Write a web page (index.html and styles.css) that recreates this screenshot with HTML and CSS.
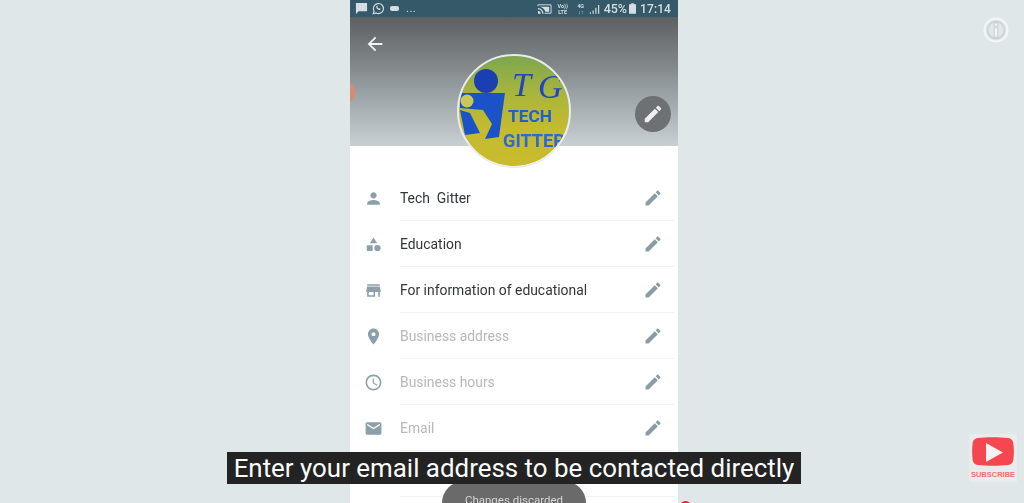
FILE: index.html
```html
<!DOCTYPE html>
<html lang="en">
<head>
<meta charset="utf-8">
<title>Tech Gitter business profile</title>
<link rel="stylesheet" href="styles.css">
</head>
<body>
<svg class="defs" width="0" height="0" aria-hidden="true">
  <symbol id="i-edit" viewBox="0 0 24 24"><path d="M3 17.25V21h3.75L17.81 9.94l-3.75-3.75L3 17.25zM20.71 7.04c.39-.39.39-1.02 0-1.41l-2.34-2.34c-.39-.39-1.02-.39-1.41 0l-1.83 1.83 3.75 3.75 1.83-1.83z"/></symbol>
  <symbol id="i-person" viewBox="0 0 24 24"><path d="M12 12c2.21 0 4-1.79 4-4s-1.79-4-4-4-4 1.79-4 4 1.79 4 4 4zm0 2c-2.67 0-8 1.34-8 4v2h16v-2c0-2.66-5.33-4-8-4z"/></symbol>
  <symbol id="i-cat" viewBox="0 0 24 24"><path d="M12 3l4.6 7.4H7.4z"/><rect x="3.5" y="12.8" width="7.4" height="7.4" rx=".8"/><circle cx="17" cy="16.5" r="4"/></symbol>
  <symbol id="i-store" viewBox="0 0 24 24"><path d="M20 4H4v2h16V4zm1 10v-2l-1-5H4l-1 5v2h1v6h10v-6h4v6h2v-6h1zm-9 4H6v-4h6v4z"/></symbol>
  <symbol id="i-place" viewBox="0 0 24 24"><path d="M12 2C8.13 2 5 5.13 5 9c0 5.25 7 13 7 13s7-7.75 7-13c0-3.87-3.13-7-7-7zm0 9.5c-1.38 0-2.5-1.12-2.5-2.5s1.12-2.5 2.5-2.5 2.5 1.12 2.5 2.5-1.12 2.5-2.5 2.5z"/></symbol>
  <symbol id="i-clock" viewBox="0 0 24 24"><path d="M11.99 2C6.47 2 2 6.48 2 12s4.47 10 9.99 10C17.52 22 22 17.52 22 12S17.52 2 11.99 2zM12 20c-4.42 0-8-3.58-8-8s3.58-8 8-8 8 3.58 8 8-3.58 8-8 8zm.5-13H11v6l5.25 3.15.75-1.23-4.5-2.67z"/></symbol>
  <symbol id="i-mail" viewBox="0 0 24 24"><path d="M20 4H4c-1.1 0-1.99.9-1.99 2L2 18c0 1.1.9 2 2 2h16c1.1 0 2-.9 2-2V6c0-1.1-.9-2-2-2zm0 4l-8 5-8-5V6l8 5 8-5v2z"/></symbol>
  <symbol id="i-globe" viewBox="0 0 24 24"><circle cx="12" cy="12" r="9"/></symbol>
</svg>

<main class="phone">
  <div class="status">
    <div class="status-left">
      <svg class="st-ico" viewBox="0 0 14 14"><path d="M1 1h12v9H4l-3 3z"/></svg>
      <svg class="st-ico" viewBox="0 0 14 14"><path class="ring" d="M1.4 12.6l.8-3A5.4 5.4 0 1 1 4.4 11.8z"/><path d="M5 4.200c-.8.7-.6 2 .6 3.300 1.300 1.300 2.600 1.600 3.300.8l.3-1-1.300-.7-.6.5c-.6-.2-1.200-.8-1.500-1.500l.5-.6-.6-1.300z"/></svg>
      <span class="pill"></span>
      <span class="dots">...</span>
    </div>
    <div class="status-right">
      <svg class="cast" viewBox="0 0 16 12"><path class="ring" d="M1 3V1.500h14v9H8"/><path d="M1 5a6 6 0 0 1 6 6H5.700A4.700 4.700 0 0 0 1 6.300zM1 8a3 3 0 0 1 3 3H1zM3 3.500h10v5.500H9A8 8 0 0 0 3 3.500z"/></svg>
      <span class="tiny">Vo))<br>LTE</span>
      <span class="tiny">4G<br>↓↑</span>
      <svg class="signal" viewBox="0 0 14 12"><path d="M1 10h1.500v2H1zM4.500 8H6v4H4.500zM8 4.500h1.500V12H8zM11.500 1H13v11h-1.500z"/></svg>
      <span class="pct">45%</span>
      <svg class="batt" viewBox="0 0 8 12"><path d="M2.500 0h3v1H7.500a.5.5 0 0 1 .5.5V11.500a.5.5 0 0 1-.5.500h-7a.5.5 0 0 1-.5-.5V1.500A.5.5 0 0 1 .5 1h2z"/></svg>
      <span class="time">17:14</span>
    </div>
  </div>

  <header class="cover">
    <svg class="back" viewBox="0 0 24 24"><path d="M20 11H7.830l5.590-5.590L12 4l-8 8 8 8 1.410-1.410L7.830 13H20v-2z"/></svg>
    <span class="edge"></span>
  </header>

  <ul class="rows">
    <li class="row"><svg class="ico"><use href="#i-person"/></svg><div class="cell"><span class="label">Tech&nbsp; Gitter</span><svg class="pen"><use href="#i-edit"/></svg></div></li>
    <li class="row"><svg class="ico"><use href="#i-cat"/></svg><div class="cell"><span class="label">Education</span><svg class="pen"><use href="#i-edit"/></svg></div></li>
    <li class="row"><svg class="ico"><use href="#i-store"/></svg><div class="cell"><span class="label">For information of educational</span><svg class="pen"><use href="#i-edit"/></svg></div></li>
    <li class="row"><svg class="ico"><use href="#i-place"/></svg><div class="cell"><span class="label muted">Business address</span><svg class="pen"><use href="#i-edit"/></svg></div></li>
    <li class="row"><svg class="ico"><use href="#i-clock"/></svg><div class="cell"><span class="label muted">Business hours</span><svg class="pen"><use href="#i-edit"/></svg></div></li>
    <li class="row"><svg class="ico"><use href="#i-mail"/></svg><div class="cell"><span class="label muted">Email</span><svg class="pen"><use href="#i-edit"/></svg></div></li>
    <li class="row"><svg class="ico"><use href="#i-globe"/></svg><div class="cell"><span class="label"></span><svg class="pen"><use href="#i-edit"/></svg></div></li>
  </ul>

  <div class="avatar">
    <svg viewBox="0 0 114 114" width="114" height="114">
      <defs>
        <linearGradient id="logo-bg" x1="0" y1="0" x2="0" y2="1">
          <stop offset="0" stop-color="#7ba64e"/>
          <stop offset=".35" stop-color="#a9b53c"/>
          <stop offset=".65" stop-color="#c4bb2f"/>
          <stop offset="1" stop-color="#c9bb2c"/>
        </linearGradient>
        <clipPath id="logo-clip"><circle cx="57" cy="57" r="55"/></clipPath>
      </defs>
      <g clip-path="url(#logo-clip)">
        <rect width="114" height="114" fill="url(#logo-bg)"/>
        <circle cx="29" cy="27" r="12" fill="#1a3fb0"/>
        <path d="M3 39H48L47 46 42 83 28 85 35 70 26 56 3 54z" fill="#1c52c8"/>
        <circle cx="10" cy="47" r="6.500" fill="#c9c95a"/>
        <path d="M3 56 13 59 23 79 8 81z" fill="#1c52c8"/>
        <text class="logo-tg" x="55" y="42">T</text>
        <text class="logo-tg" x="81" y="44">G</text>
        <text class="logo-tech" x="51" y="68" textLength="44" lengthAdjust="spacingAndGlyphs">TECH</text>
        <text class="logo-gitter" x="46" y="93" textLength="62" lengthAdjust="spacingAndGlyphs">GITTER</text>
      </g>
      <circle cx="57" cy="57" r="56" fill="none" stroke="#e9edea" stroke-width="2"/>
    </svg>
  </div>

  <div class="fab"><svg><use href="#i-edit"/></svg></div>
  <div class="toast">Changes discarded</div>
</main>

<div class="blip"></div>
<div class="caption">Enter your email address to be contacted directly</div>

<div class="info">
  <svg viewBox="0 0 26 26" width="26" height="26">
    <circle cx="13" cy="13" r="11.500" class="info-ring"/>
    <circle cx="13" cy="13" r="8.500" class="info-inner"/>
    <path class="info-i" d="M11.300 6h3.400v3.200h-3.400zM11.300 10.800h3.400v9.400h-3.400z"/>
  </svg>
</div>

<div class="subscribe">
  <svg viewBox="0 0 42 29" width="42" height="29">
    <path d="M6 1C14 0 28 0 36 1 40 1.500 41.500 4 41.500 8c.5 4 .5 9 0 13 0 4-1.500 6.500-5.500 7-8 1-22 1-30 0-4-.5-5.500-3-5.500-7-.5-4-.5-9 0-13C.5 4 2 1.500 6 1z" fill="#f4474f"/>
    <path d="M14 6 31 15.500 14 25z" fill="#f6f1f0"/>
  </svg>
  <span>SUBSCRIBE</span>
</div>
</body>
</html>
```

FILE: styles.css
```css
* { box-sizing: border-box; }

html, body {
  margin: 0;
  height: 503px;
  overflow: hidden;
}

body {
  position: relative;
  background: #dfe7e8;
  font-family: Roboto, "Liberation Sans", sans-serif;
}

.defs { position: absolute; }

.phone {
  position: relative;
  width: 328px;
  height: 503px;
  margin-left: 350px;
  background: #fff;
  overflow: hidden;
  filter: blur(0.5px);
}

/* status bar */
.status {
  display: flex;
  justify-content: space-between;
  align-items: center;
  height: 17px;
  padding: 0 7px 0 5px;
  background: #36596a;
  color: #d5dfe3;
}
.status-left, .status-right {
  display: flex;
  align-items: center;
}
.status-left { gap: 4px; }
.status-right { gap: 2px; }
.st-ico { width: 13px; height: 13px; fill: #d5dfe3; }
.st-ico .ring { fill: none; stroke: #d5dfe3; stroke-width: 1.2; }
.pill {
  width: 9px;
  height: 5px;
  margin-left: 1px;
  border-radius: 2px;
  background: #d5dfe3;
}
.dots { margin-left: 3px; font-size: 11px; line-height: 11px; letter-spacing: .5px; }
.cast { width: 15px; height: 12px; margin-right: 3px; fill: #d5dfe3; }
.cast .ring { fill: none; stroke: #d5dfe3; stroke-width: 1; }
.tiny {
  width: 12px;
  margin-right: 4px;
  font-size: 5.500px;
  line-height: 6px;
  font-weight: 700;
  text-align: center;
}
.signal { width: 11px; height: 10px; margin: 0 2px 0 -4px; fill: #d5dfe3; }
.pct { font-size: 12.500px; font-weight: 500; }
.batt { width: 7px; height: 11px; fill: #d5dfe3; }
.time { margin-left: 2px; font-size: 12px; font-weight: 500; letter-spacing: .1px; }

/* cover */
.cover {
  position: relative;
  height: 129px;
  padding: 16px 0 0 14px;
  background: linear-gradient(#5d5f61 0%, #7f8587 35%, #a7aeb2 70%, #c8d0d4 100%);
}
.back { display: block; width: 22px; height: 22px; fill: #f2f4f4; }
.edge {
  position: absolute;
  left: -5px;
  top: 67px;
  width: 10px;
  height: 17px;
  border-radius: 50%;
  background: #d98a72;
}

/* list */
.rows {
  margin: 0;
  padding: 29px 0 0;
  list-style: none;
}
.row {
  display: flex;
  height: 46px;
}
.ico {
  flex: none;
  width: 19px;
  height: 19px;
  margin: 14px 0 0 14px;
  fill: #8ba0aa;
}
.cell {
  display: flex;
  flex: 1;
  align-items: center;
  justify-content: space-between;
  margin: 0 4px 0 17px;
  padding: 0 11px 0 0;
  border-bottom: 1px solid #eff3f3;
}
.label {
  font-size: 13.900px;
  color: #30383b;
}
.muted { color: #b3b9bc; }
.pen {
  width: 20px;
  height: 20px;
  fill: #8a9da4;
}

/* overlays */
.avatar {
  position: absolute;
  left: 107px;
  top: 54px;
  width: 114px;
  height: 114px;
}
.logo-tg {
  font-family: "Liberation Serif", serif;
  font-style: italic;
  font-size: 34px;
  fill: #2146c0;
}
.logo-tech {
  font-family: Roboto, sans-serif;
  font-weight: 700;
  font-size: 17px;
  fill: #1f5fd0;
}
.logo-gitter {
  font-family: Roboto, sans-serif;
  font-weight: 700;
  font-size: 19px;
  fill: #2a6ad2;
}
.fab {
  position: absolute;
  left: 285px;
  top: 96px;
  display: flex;
  align-items: center;
  justify-content: center;
  width: 36px;
  height: 36px;
  border-radius: 50%;
  background: #6e7174;
}
.fab svg { width: 22px; height: 22px; fill: #eef0f0; }
.toast {
  position: absolute;
  left: 92px;
  top: 481px;
  width: 144px;
  height: 50px;
  padding-top: 12px;
  border-radius: 22px;
  background: #6a6a6a;
  color: #d6d6d6;
  font-size: 11.500px;
  text-align: center;
}
.blip {
  position: absolute;
  left: 680px;
  top: 501px;
  width: 11px;
  height: 11px;
  border-radius: 50%;
  background: #e8203a;
}
.caption {
  position: absolute;
  left: 227px;
  top: 452px;
  width: 574px;
  height: 32px;
  background: #232323;
  color: #fbfbfb;
  font-size: 25.900px;
  line-height: 32px;
  text-align: center;
  white-space: nowrap;
}
.info {
  position: absolute;
  left: 983px;
  top: 17px;
  width: 26px;
  height: 26px;
}
.info-ring { fill: none; stroke: #f4f6f6; stroke-width: 2; }
.info-inner { fill: none; stroke: #c9d0d1; stroke-width: 1.500; }
.info-i { fill: #f4f6f6; stroke: #b7bebf; stroke-width: .6; }
.subscribe {
  position: absolute;
  left: 969px;
  top: 434px;
  display: flex;
  flex-direction: column;
  align-items: center;
  width: 48px;
  height: 48px;
  padding-top: 3px;
  background: #e9eced;
}
.subscribe svg { flex: none; }
.subscribe span {
  margin-top: 5px;
  color: #f56b72;
  font-family: "Liberation Sans", sans-serif;
  font-size: 7.500px;
  font-weight: 700;
  line-height: 8px;
}
```
